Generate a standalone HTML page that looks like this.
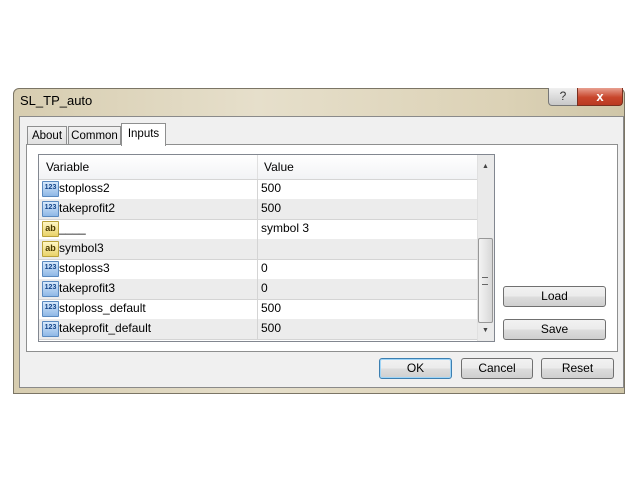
<!DOCTYPE html><html><head><style>
body{margin:0;width:640px;height:480px;background:#fff;position:relative;font-family:"Liberation Sans",sans-serif;font-size:12px;color:#000;overflow:hidden}
.a{position:absolute;box-sizing:border-box}
.btn{position:absolute;box-sizing:border-box;border:1px solid #707070;border-radius:3px;background:linear-gradient(#f2f2f2 0%,#ebebeb 50%,#dddddd 51%,#cfcfcf 100%);text-align:center;font-size:12px;line-height:18px}
.row{position:absolute;left:0;width:438px;height:20px;border-bottom:1px solid #d4d4d4;font-size:12px;line-height:19px}
.row .v{position:absolute;left:20px}
.row .w{position:absolute;left:218px;border-left:1px solid #d4d4d4;height:20px;top:0;padding-left:3px}
.ic{position:absolute;left:3px;top:2px;width:15px;height:14px;border:1px solid #5a8ac0;background:linear-gradient(#d6e8fb,#8fb8e6);font-size:7px;line-height:12px;color:#13458a;font-weight:bold;text-align:center;border-radius:1px}
.ab{border-color:#b9a23a;background:linear-gradient(#fff7c4,#e9d26a);color:#4a3a00;font-size:9px}
.g{background:#ececec}
.tab{font-size:11.5px}
</style></head><body>
<div class="a" style="left:13px;top:88px;width:612px;height:306px;background:linear-gradient(90deg,#d7cdb0,#e6dfcb 40%,#dcd2b6 80%,#cfc6a8);border:1px solid #7b7565;border-radius:6px 6px 0 0"></div>
<div class="a" style="left:20px;top:93px;font-size:13px">SL_TP_auto</div>
<div class="a" style="left:548px;top:88px;width:30px;height:18px;border:1px solid #777;border-top:none;border-radius:0 0 0 4px;background:linear-gradient(#f0f0f0,#c8c8c8);text-align:center;font-size:12px;color:#333;line-height:17px">?</div>
<div class="a" style="left:577px;top:88px;width:46px;height:18px;border:1px solid #7a3020;border-top:none;border-radius:0 0 4px 0;background:linear-gradient(#e8a090,#c8462c 55%,#b93a22);text-align:center;color:#fff;font-weight:bold;font-size:13px;line-height:17px">x</div>
<div class="a" style="left:19px;top:116px;width:605px;height:272px;background:#f0f0f0;border:1px solid #8a8a8a"></div>
<div class="a tab" style="left:27px;top:126px;width:40px;height:19px;border:1px solid #8e8f8f;border-bottom:none;background:linear-gradient(#f2f2f2,#e0e0e0);line-height:19px;text-align:center">About</div>
<div class="a tab" style="left:68px;top:126px;width:53px;height:19px;border:1px solid #8e8f8f;border-bottom:none;background:linear-gradient(#f2f2f2,#e0e0e0);line-height:19px;text-align:center">Common</div>
<div class="a tab" style="left:121px;top:123px;width:45px;height:23px;border:1px solid #8e8f8f;border-bottom:none;background:#fff;z-index:2;line-height:21px;text-align:center">Inputs</div>
<div class="a" style="left:26px;top:144px;width:592px;height:208px;border:1px solid #8e8f8f;background:#fff"></div>
<div class="a" style="left:38px;top:154px;width:457px;height:188px;border:1px solid #828790;background:#fff;overflow:hidden">
 <div class="row" style="top:0;height:24px;line-height:24px;background:linear-gradient(#fff,#f2f3f5);border-bottom:1px solid #d5d5d5"><span style="position:absolute;left:7px">Variable</span><span class="w" style="height:24px;border-left:1px solid #e0e0e0;padding-left:6px">Value</span></div>
 <div class="row" style="top:24px"><div class="ic">123</div><span class="v">stoploss2</span><span class="w">500</span></div>
 <div class="row g" style="top:44px"><div class="ic">123</div><span class="v">takeprofit2</span><span class="w">500</span></div>
 <div class="row" style="top:64px"><div class="ic ab">ab</div><span class="v">____</span><span class="w">symbol 3</span></div>
 <div class="row g" style="top:84px"><div class="ic ab">ab</div><span class="v">symbol3</span><span class="w"></span></div>
 <div class="row" style="top:104px"><div class="ic">123</div><span class="v">stoploss3</span><span class="w">0</span></div>
 <div class="row g" style="top:124px"><div class="ic">123</div><span class="v">takeprofit3</span><span class="w">0</span></div>
 <div class="row" style="top:144px"><div class="ic">123</div><span class="v">stoploss_default</span><span class="w">500</span></div>
 <div class="row g" style="top:164px"><div class="ic">123</div><span class="v">takeprofit_default</span><span class="w">500</span></div>
 <div class="a" style="left:438px;top:0;width:17px;height:186px;background:#eaeaea;border-left:1px solid #e0e0e0"></div>
 <div class="a" style="left:443px;top:8px;font-size:7px;color:#444">▲</div>
 <div class="a" style="left:443px;top:172px;font-size:7px;color:#444">▼</div>
 <div class="a" style="left:439px;top:83px;width:15px;height:85px;border:1px solid #979797;border-radius:2px;background:linear-gradient(90deg,#f3f3f3,#d8d8d8)"><div style="position:absolute;left:3px;top:38px;width:6px;height:6px;border-top:1px solid #666;border-bottom:1px solid #666"></div></div>
</div>
<div class="btn" style="left:503px;top:286px;width:103px;height:21px">Load</div>
<div class="btn" style="left:503px;top:319px;width:103px;height:21px">Save</div>
<div class="btn" style="left:379px;top:358px;width:73px;height:21px;border-color:#3c7fb1;box-shadow:inset 0 0 0 1px #9fd5f7">OK</div>
<div class="btn" style="left:461px;top:358px;width:72px;height:21px">Cancel</div>
<div class="btn" style="left:541px;top:358px;width:73px;height:21px">Reset</div>
</body></html>
